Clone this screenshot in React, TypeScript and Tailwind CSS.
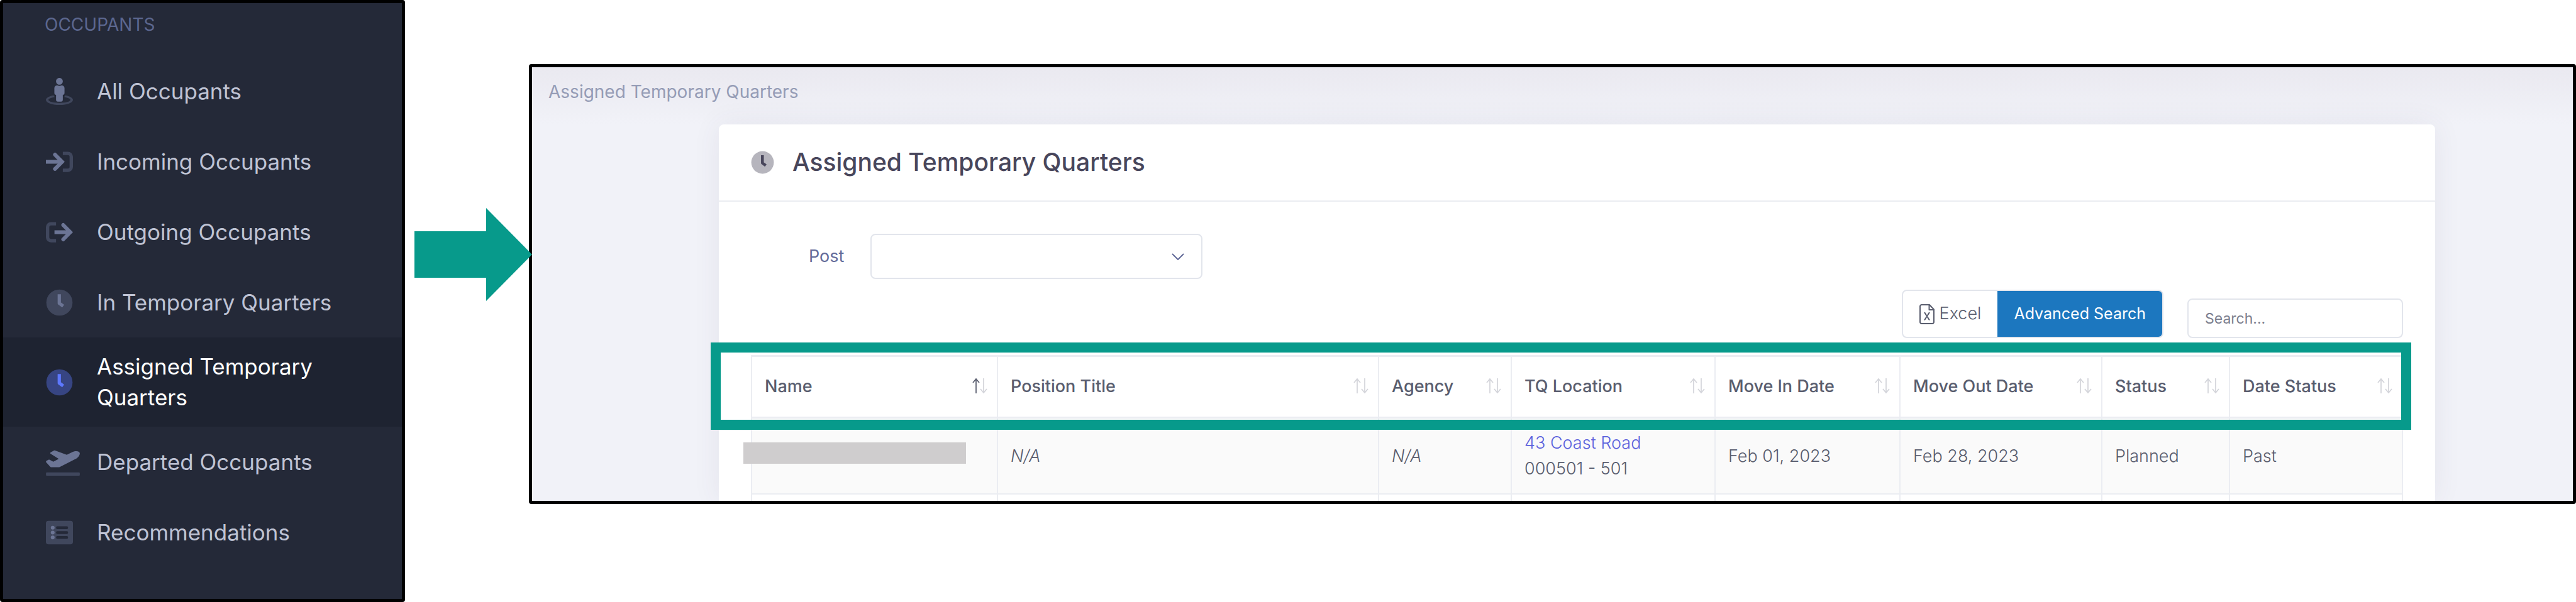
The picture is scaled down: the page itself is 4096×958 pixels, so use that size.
import { clsx } from "clsx";
import type { ReactNode } from "react";

type IconProps = { className?: string };

const StreetViewIcon = ({ className }: IconProps) => (
  <svg viewBox="0 0 512 512" fill="currentColor" className={clsx("h-[43px] w-[43px]", className)} aria-hidden="true">
    <path opacity=".4" d="M367.9 329.76c-4.62 5.3-9.78 10.1-15.9 13.65v22.94c66.52 9.34 112 28.05 112 49.65 0 30.93-93.12 56-208 56S48 446.93 48 416c0-21.6 45.48-40.3 112-49.65v-22.94c-6.12-3.55-11.28-8.35-15.9-13.65C58.87 345.34 0 378.05 0 416c0 53.02 114.62 96 256 96s256-42.98 256-96c0-37.95-58.87-70.66-144.1-86.24z" />
    <path d="M256 128c35.35 0 64-28.65 64-64S291.35 0 256 0s-64 28.65-64 64 28.65 64 64 64zm-64 192v96c0 17.67 14.33 32 32 32h64c17.67 0 32-14.33 32-32v-96c17.67 0 32-14.33 32-32v-96c0-26.51-21.49-48-48-48h-11.8c-11.07 5.03-23.26 8-36.2 8s-25.13-2.97-36.2-8H208c-26.51 0-48 21.49-48 48v96c0 17.67 14.33 32 32 32z" />
  </svg>
);

const SignInIcon = ({ className }: IconProps) => (
  <svg viewBox="0 0 512 512" fill="none" stroke="currentColor" className={clsx("h-[43px] w-[43px]", className)} aria-hidden="true">
    <path opacity=".4" strokeWidth="64" d="M320 96h96a64 64 0 0 1 64 64v192a64 64 0 0 1-64 64h-96" />
    <path strokeWidth="72" d="M0 256h306" />
    <path strokeWidth="72" strokeLinecap="round" d="M172 120l134 136-134 136" />
  </svg>
);

const SignOutIcon = ({ className }: IconProps) => (
  <svg viewBox="0 0 512 512" fill="none" stroke="currentColor" className={clsx("h-[43px] w-[43px]", className)} aria-hidden="true">
    <path opacity=".4" strokeWidth="64" d="M192 96H96a64 64 0 0 0-64 64v192a64 64 0 0 0 64 64h96" />
    <path strokeWidth="72" d="M162 256h300" />
    <path strokeWidth="72" strokeLinecap="round" d="M328 120l134 136-134 136" />
  </svg>
);

const ClockIcon = ({ className }: IconProps) => (
  <svg viewBox="0 0 512 512" className={className} aria-hidden="true">
    <circle cx="256" cy="256" r="248" fill="currentColor" opacity=".4" />
    <path fill="none" stroke="currentColor" strokeWidth="62" strokeLinejoin="round" d="M253 98v172l74 54" />
  </svg>
);

const PlaneIcon = ({ className }: IconProps) => (
  <svg viewBox="0 0 640 512" fill="currentColor" className={clsx("h-[43px] w-[54px]", className)} aria-hidden="true">
    <path opacity=".4" d="M624 448H16c-8.84 0-16 7.16-16 16v32c0 8.84 7.16 16 16 16h608c8.84 0 16-7.16 16-16v-32c0-8.84-7.16-16-16-16z" />
    <path d="M80.55 341.27c6.28 6.84 15.1 10.72 24.33 10.71l130.54-.18a65.62 65.62 0 0 0 29.64-7.12l290.96-147.65c26.74-13.57 50.71-32.94 67.02-58.31 18.31-28.48 20.3-49.09 13.07-63.65-7.21-14.57-24.74-25.27-58.25-27.45-29.85-1.94-59.54 5.92-86.28 19.48l-98.51 49.99-218.7-82.06a17.8 17.8 0 0 0-18-1.11L90.62 67.29c-10.67 5.41-13.25 19.65-5.17 28.53l156.22 98.1-103.21 52.38-72.35-36.47a17.8 17.8 0 0 0-16.07.02L9.91 230.22c-10.44 5.3-13.19 19.12-5.57 28.08l76.21 82.97z" />
  </svg>
);

const ListIcon = ({ className }: IconProps) => (
  <svg viewBox="0 0 512 512" className={clsx("h-[43px] w-[43px]", className)} aria-hidden="true">
    <rect y="32" width="512" height="448" rx="48" fill="currentColor" opacity=".4" />
    <path stroke="#242938" strokeWidth="52" strokeLinecap="round" d="M218 164h176M218 256h176M218 348h176" />
    <g fill="currentColor">
      <circle cx="129" cy="164" r="36" />
      <circle cx="129" cy="256" r="36" />
      <circle cx="129" cy="348" r="36" />
    </g>
  </svg>
);

const FileExcelIcon = () => (
  <svg viewBox="0 0 24 32" fill="none" stroke="currentColor" strokeWidth="2" strokeLinejoin="round" className="h-8 w-6" aria-hidden="true">
    <path d="M3.5 1H16l7 7.500V28.500a2.500 2.500 0 0 1-2.500 2.500h-17A2.500 2.500 0 0 1 1 28.500v-25A2.500 2.500 0 0 1 3.500 1z" />
    <path d="M15.500 1v8H23M8 13l8 12.500M16 13L8 25.500" />
  </svg>
);

const SortIcon = ({ active }: { active?: boolean }) => (
  <svg viewBox="0 0 24 24" fill="none" className="mb-1 h-6 w-6 shrink-0" aria-hidden="true">
    <g stroke={active ? "#595d6e" : "#d3d4da"} strokeWidth="1.7">
      <path d="M6 24V2" />
      <path d="M1 7l5-6 5 6" />
    </g>
    <g stroke="#d3d4da" strokeWidth="1.7">
      <path d="M18 0v22" />
      <path d="M13 17l5 6 5-6" />
    </g>
  </svg>
);

type MenuItem = { label: string; icon: ReactNode; active?: boolean };

const menu: MenuItem[] = [
  { label: "All Occupants", icon: <StreetViewIcon /> },
  { label: "Incoming Occupants", icon: <SignInIcon /> },
  { label: "Outgoing Occupants", icon: <SignOutIcon /> },
  { label: "In Temporary Quarters", icon: <ClockIcon className="h-[43px] w-[43px]" /> },
  { label: "Assigned Temporary Quarters", icon: <ClockIcon className="h-[43px] w-[43px]" />, active: true },
  { label: "Departed Occupants", icon: <PlaneIcon /> },
  { label: "Recommendations", icon: <ListIcon /> },
];

const columns = [
  { label: "Name", width: "w-[391px]" },
  { label: "Position Title", width: "w-[606px]" },
  { label: "Agency", width: "w-[211px]" },
  { label: "TQ Location", width: "w-[324px]" },
  { label: "Move In Date", width: "w-[294px]" },
  { label: "Move Out Date", width: "w-[321px]" },
  { label: "Status", width: "w-[203px]" },
  { label: "Date Status", width: "w-auto" },
];

const cell = "border-x-2 border-[#ebedf2] pl-5";

const Sidebar = () => (
  <aside className="w-[644px] shrink-0 rounded-sm border-[5px] border-black bg-[#242938]">
    <h2 className="pt-[14px] pl-[66px] text-[28px] leading-[40px] text-[#5c678f]">OCCUPANTS</h2>
    <nav className="pt-[30px]">
      {menu.map((item) => (
        <a
          key={item.label}
          href="#"
          className={clsx(
            "flex min-h-28 items-center py-[22px] pr-16 pl-[68px] text-[35px] leading-[49px]",
            item.active ? "bg-[#1e2331] text-white" : "text-[#bfc3d4]",
          )}
        >
          <span className={clsx("w-[81px] shrink-0", item.active ? "text-[#5d78ff]" : "text-[#6c7595]")}>{item.icon}</span>
          <span>{item.label}</span>
        </a>
      ))}
    </nav>
  </aside>
);

const Toolbar = () => (
  <div className="flex items-end justify-end gap-[38px]">
    <div className="flex h-[77px] overflow-hidden rounded-lg border-2 border-[#e2e5ec]">
      <button type="button" className="flex items-center gap-2 px-[26px] text-[27px] font-light text-[#595d6e]">
        <FileExcelIcon />
        Excel
      </button>
      <button type="button" className="bg-[#1c77bf] px-[26px] text-[25px] text-white">
        Advanced Search
      </button>
    </div>
    <input
      type="search"
      aria-label="Search"
      placeholder="Search..."
      className="h-[63px] w-[343px] rounded-lg border-2 border-[#e2e5ec] px-[26px] text-[23px] placeholder:text-[#7b7e8e]"
    />
  </div>
);

const QuartersTable = () => (
  <div className="relative">
    <table className="w-full table-fixed border-collapse text-left text-[27px] text-[#595d6e]">
      <thead>
        <tr className="h-[98px] border-y-3 border-[#ebedf2]">
          {columns.map((col, i) => (
            <th key={col.label} scope="col" className={clsx(cell, col.width, "pr-[15px] font-medium")}>
              <span className="flex items-center justify-between">
                {col.label}
                <SortIcon active={i === 0} />
              </span>
            </th>
          ))}
        </tr>
      </thead>
      <tbody className="font-light leading-[41px]">
        <tr className="h-[121px] border-b-2 border-[#ebedf2] bg-[#fafafa]">
          <td className={cell}>
            {/* occupant name is redacted */}
            <div className="relative mb-2 -ml-[34px] h-[34px] w-[354px] bg-[#cfcdce]" />
          </td>
          <td className={clsx(cell, "italic")}>N/A</td>
          <td className={clsx(cell, "italic")}>N/A</td>
          <td className={cell}>
            <a href="#" className="block text-[#5d63dd]">43 Coast Road</a>
            000501 - 501
          </td>
          <td className={cell}>Feb 01, 2023</td>
          <td className={cell}>Feb 28, 2023</td>
          <td className={cell}>Planned</td>
          <td className={cell}>Past</td>
        </tr>
        <tr className="h-[11px]">
          {columns.map((col) => (
            <td key={col.label} className={cell} />
          ))}
        </tr>
      </tbody>
    </table>
    {/* callout around the header row */}
    <div className="pointer-events-none absolute -top-5 -right-[13px] -left-16 h-[139px] border-[16px] border-[#079a8b]" />
  </div>
);

const App = () => {
  return (
    <div className="flex min-h-screen bg-white font-['Inter','Noto_Sans',sans-serif]">
      <Sidebar />

      <svg viewBox="0 0 187 148" className="relative z-10 mt-[331px] mr-[-5px] ml-[15px] h-[148px] w-[187px] shrink-0" aria-hidden="true">
        <path fill="#079a8b" d="M0 37h114V0l73 74-73 74v-37H0z" />
      </svg>

      <main className="mt-[102px] min-w-0 flex-1 self-start overflow-hidden rounded-sm border-[5px] border-black bg-[#f1f2f8]">
        <div className="bg-linear-to-b from-[#eae9f0] to-[#f1f2f8] pt-[18px] pb-[31px] pl-[26px] text-[28px] leading-[42px] text-[#959cb6]">
          Assigned Temporary Quarters
        </div>

        <section className="mr-[219px] ml-[297px] rounded-t-lg bg-white shadow-[0_0_44px_rgba(82,63,105,0.08)]">
          <header className="flex h-[123px] items-center gap-[29px] border-b-2 border-[#ebedf2] px-[51px] text-[#48465b]">
            <ClockIcon className="h-[37px] w-[37px]" />
            <h1 className="text-[39px] font-medium">Assigned Temporary Quarters</h1>
          </header>

          <div className="px-[51px] pt-[51px]">
            <div className="flex items-center gap-[42px] pb-[17px] pl-[92px]">
              <label htmlFor="post" className="text-[27px] text-[#646c9a]">Post</label>
              <div className="relative">
                <select id="post" className="block h-[72px] w-[528px] appearance-none rounded-lg border-2 border-[#e2e5ec] bg-white px-6 text-[27px]" />
                <svg viewBox="0 0 20 11" fill="none" stroke="#646c9a" strokeWidth="2" className="pointer-events-none absolute top-[31px] right-[29px] h-[11px] w-5" aria-hidden="true">
                  <path d="M1 1l9 9 9-9" />
                </svg>
              </div>
            </div>
            <Toolbar />
            <div className="pt-[27px]">
              <QuartersTable />
            </div>
          </div>
        </section>
      </main>
    </div>
  );
};

export default App;
